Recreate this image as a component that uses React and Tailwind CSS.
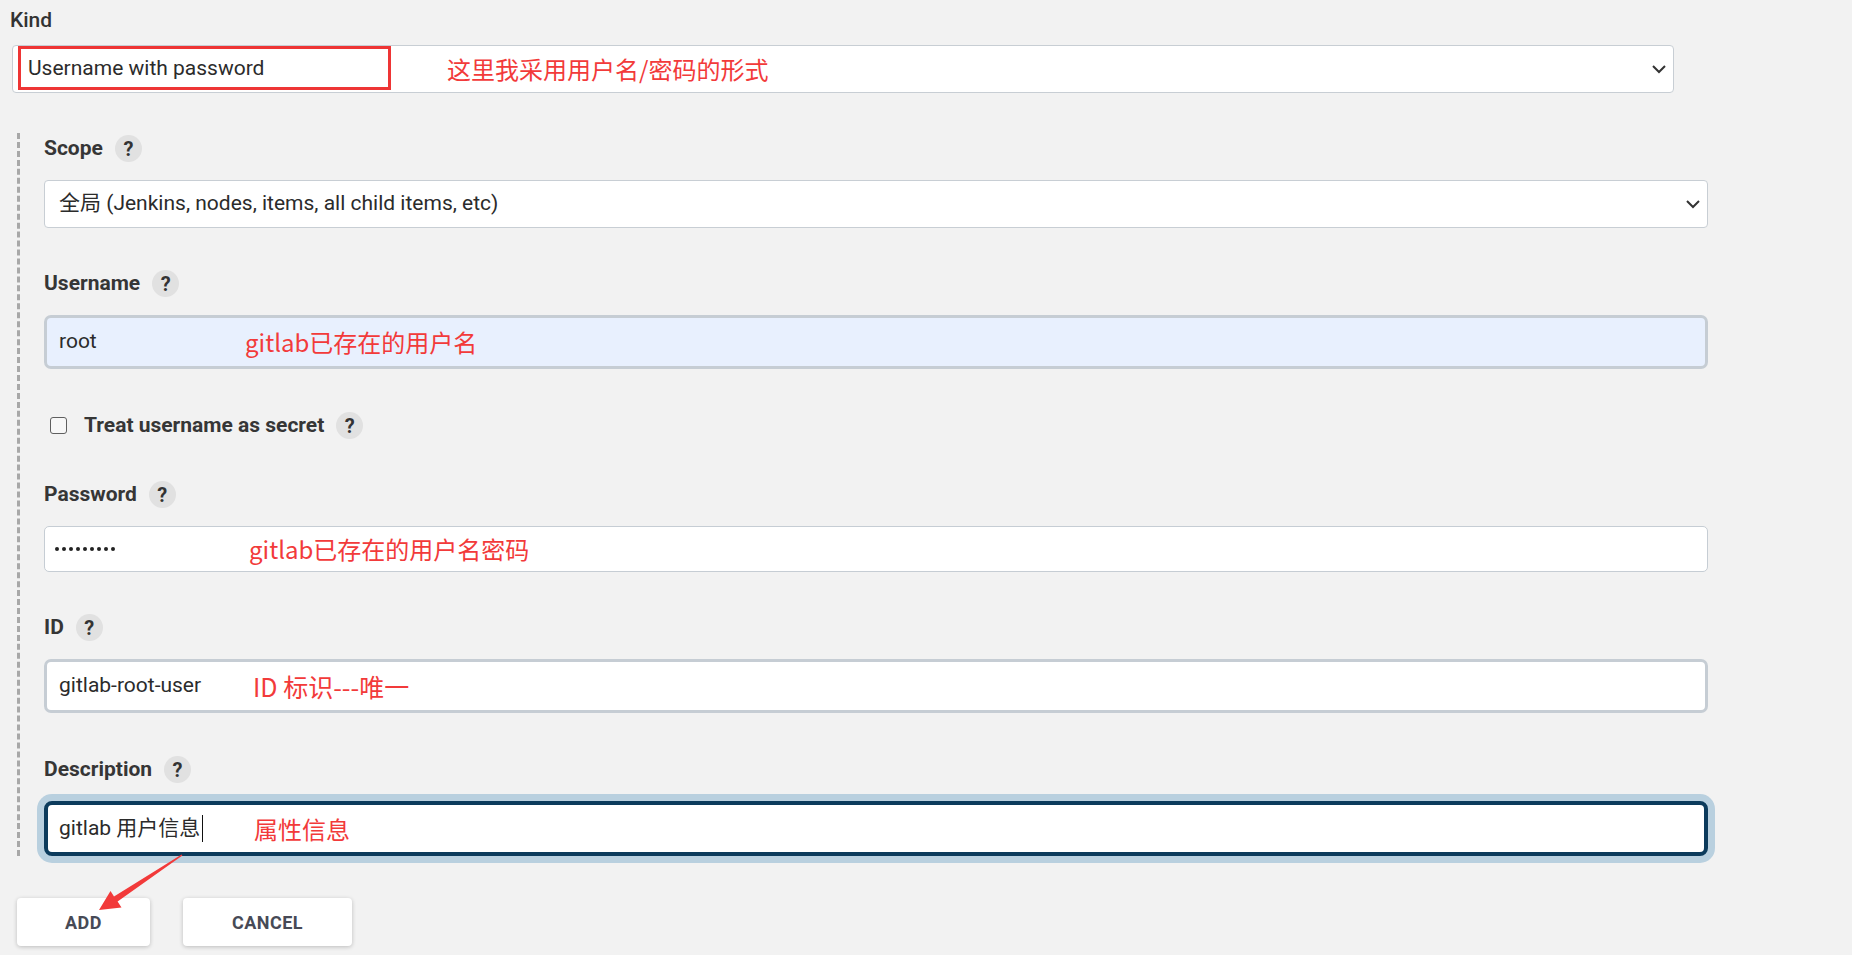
import React from 'react';

const Help = () => (
    <span className="ml-[12px] flex h-[27px] w-[27px] items-center justify-center rounded-full bg-[#e1e1e1] text-[20px] font-bold leading-none text-[#333]">?</span>
);

const FieldLabel = ({ children, className = '' }) => (
    <div className={`flex h-[27px] items-center text-[21px] font-bold leading-none text-[#363636] ${className}`}>
        <span>{children}</span>
        <Help />
    </div>
);

const Note = ({ children, left, size = 'text-[24px]' }) => (
    <span
        className={`absolute top-1/2 -translate-y-1/2 whitespace-nowrap font-['Microsoft_YaHei','Noto_Sans_CJK_SC',sans-serif] leading-none text-[#f23a3a] ${size} ${left}`}
    >
        {children}
    </span>
);

const Chevron = () => (
    <svg className="absolute right-[6px] top-1/2 h-[10px] w-[16px] -translate-y-1/2" viewBox="0 0 16 10" fill="none" stroke="#333" strokeWidth="2">
        <path d="M2 2l6 6 6-6" />
    </svg>
);

const App = () => {
    return (
        <div className="relative h-[955px] w-[1852px] overflow-hidden bg-[#f2f2f2] pl-[12px] pt-[8px] font-['Roboto','Noto_Sans_CJK_SC',sans-serif] text-[#2b2b2b]">
            {/* kind */}
            <div className="-ml-[2px] h-[24px] text-[21px] font-medium leading-[24px] text-[#333]">Kind</div>
            <div className="relative mt-[13px] flex h-[48px] w-[1662px] items-center rounded-[4px] border border-[#c8ced4] bg-white pl-[15px] text-[21px]">
                <span>Username with password</span>
                <div className="absolute left-[5px] top-0 h-[44px] w-[373px] border-[3px] border-[#ee3535]" />
                <Note left="left-[434px]">这里我采用用户名/密码的形式</Note>
                <Chevron />
            </div>

            {/* credential fields */}
            <div className="ml-[5px] mt-[40px] w-[1700px] border-l-[3px] border-dashed border-[#a8a8a8] pl-[24px] pt-[2px]">
                <FieldLabel>Scope</FieldLabel>
                <div className="relative mt-[18px] flex h-[48px] w-[1664px] items-center rounded-[4px] border border-[#c8ced4] bg-white pl-[14px] text-[21px]">
                    <span>全局 (Jenkins, nodes, items, all child items, etc)</span>
                    <Chevron />
                </div>

                <FieldLabel className="mt-[42px]">Username</FieldLabel>
                <div className="relative mt-[18px] flex h-[54px] w-[1664px] items-center rounded-[7px] border-[3px] border-[#c6cdd4] bg-[#e8f0fe] pl-[12px] text-[21px]">
                    <span>root</span>
                    <Note left="left-[198px]">gitlab已存在的用户名</Note>
                </div>

                <div className="mt-[43px] flex h-[27px] items-center text-[21px] font-bold leading-none text-[#363636]">
                    <span className="ml-[6px] h-[17px] w-[17px] rounded-[3px] border-[1.5px] border-[#5f5f5f] bg-[#f7f7f7]" />
                    <span className="ml-[17px]">Treat username as secret</span>
                    <Help />
                </div>

                <FieldLabel className="mt-[42px]">Password</FieldLabel>
                <div className="relative mt-[18px] flex h-[46px] w-[1664px] items-center rounded-[5px] border border-[#c6cdd4] bg-white pl-[10px]">
                    <span className="flex gap-[3px]">
                        {Array.from({ length: 9 }).map((_, i) => (
                            <span key={i} className="h-[4px] w-[4px] rounded-full bg-[#222]" />
                        ))}
                    </span>
                    <Note left="left-[204px]">gitlab已存在的用户名密码</Note>
                </div>

                <FieldLabel className="mt-[42px]">ID</FieldLabel>
                <div className="relative mt-[18px] flex h-[54px] w-[1664px] items-center rounded-[7px] border-[3px] border-[#c6cdd4] bg-white pl-[12px] text-[21px]">
                    <span>gitlab-root-user</span>
                    <Note left="left-[206px]" size="text-[25px]">ID 标识---唯一</Note>
                </div>

                <FieldLabel className="mt-[43px]">Description</FieldLabel>
                <div className="relative mt-[18px] flex h-[55px] w-[1664px] items-center rounded-[8px] border-[4px] border-[#0c3b5c] bg-white pl-[11px] text-[21px] shadow-[0_0_0_7px_#b9d0df]">
                    <span>gitlab 用户信息</span>
                    <span className="ml-[2px] h-[27px] w-px bg-[#111]" />
                    <Note left="left-[206px]">属性信息</Note>
                </div>
            </div>

            {/* actions */}
            <div className="ml-[5px] mt-[42px] flex gap-[33px]">
                <button className="flex h-[48px] w-[133px] items-center justify-center rounded-[4px] bg-white text-[18px] font-bold tracking-[0.5px] text-[#474a56] shadow-[0_1px_4px_rgba(0,0,0,0.22)]">
                    ADD
                </button>
                <button className="flex h-[48px] w-[169px] items-center justify-center rounded-[4px] bg-white text-[18px] font-bold tracking-[0.5px] text-[#474a56] shadow-[0_1px_4px_rgba(0,0,0,0.22)]">
                    CANCEL
                </button>
            </div>

            {/* annotation arrow */}
            <svg className="absolute left-0 top-0 h-[955px] w-[300px]" viewBox="0 0 300 955">
                <polygon
                    points="182.4,855.5 117.6,901.6 121.5,907.5 99,910 110.5,891 114,896.4 181.6,854.5"
                    fill="#f23a3a"
                />
            </svg>
        </div>
    );
};

export default App;
